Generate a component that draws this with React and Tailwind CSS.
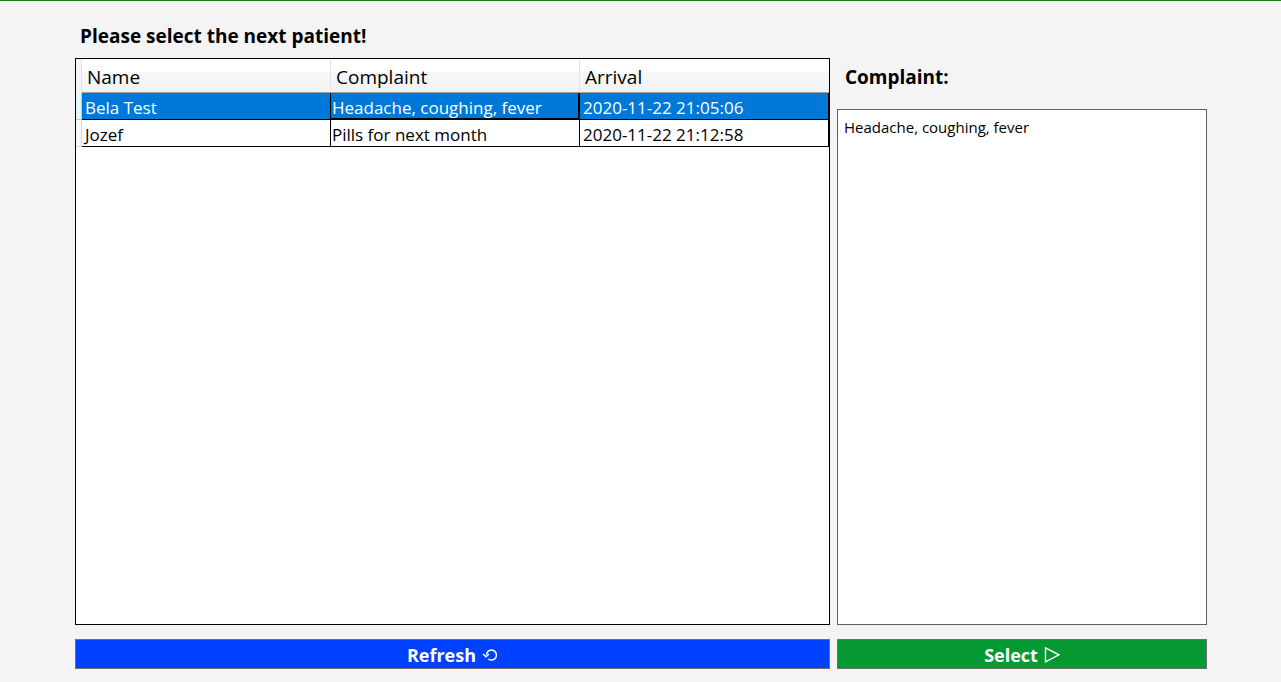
import { useState } from "react";

const patients = [
  { name: "Bela Test", complaint: "Headache, coughing, fever", arrival: "2020-11-22 21:05:06" },
  { name: "Jozef", complaint: "Pills for next month", arrival: "2020-11-22 21:12:58" },
];

function RefreshIcon() {
  return (
    <svg aria-hidden="true" width="16" height="16" viewBox="0 0 16 16" fill="none" stroke="currentColor" strokeWidth="1.5">
      <path d="M4.5 7.6A5 5 0 1 1 6.4 12" />
      <path d="M1 7L4 9.8L7 7" />
    </svg>
  );
}

function PlayIcon() {
  return (
    <svg aria-hidden="true" width="16" height="16" viewBox="0 0 16 16" fill="none" stroke="currentColor" strokeWidth="1.4">
      <path d="M1.5 0.8V14.8L15 7.8Z" />
    </svg>
  );
}

function HeaderCell({ children, last }) {
  return (
    <th
      scope="col"
      className={`h-[34px] border-b border-b-[#a0a0a0] bg-linear-to-b from-white from-40% via-[#f7f8fa] via-40% to-[#f1f2f4] px-[5px] pt-[3px] pb-0 text-left text-[19px] leading-[30px] font-normal ${last ? "" : "border-r border-r-[#e2e3e5]"}`}
    >
      {children}
    </th>
  );
}

export default function App() {
  const [selected, setSelected] = useState(0);
  return (
    <main className="flex min-h-screen flex-col border-t border-[#108010] bg-[#f4f4f4] pr-[74px] pb-[13px] pl-[75px] font-['Open_Sans',sans-serif] text-black">
      <div className="grid flex-1 grid-cols-[755fr_370fr] gap-x-[7px]">
        <section className="flex flex-col">
          <h1 className="px-[5px] pt-[22px] pb-[9px] text-[19px] leading-[26px] font-bold">
            Please select the next patient!
          </h1>
          <div className="flex-1 border border-black bg-white">
            <table className="w-full table-fixed border-separate border-spacing-0">
              <colgroup>
                <col className="w-[6px]" />
                <col />
                <col />
                <col />
              </colgroup>
              <thead>
                <tr>
                  <td className="border-r border-r-[#e2e3e5] bg-[#f4f5f6] p-0" />
                  <HeaderCell>Name</HeaderCell>
                  <HeaderCell>Complaint</HeaderCell>
                  <HeaderCell last>Arrival</HeaderCell>
                </tr>
              </thead>
              <tbody>
                {patients.map((p, i) => {
                  const on = i === selected;
                  const cell = `h-[27px] border-r border-b border-black p-0 text-[17px] leading-[23px] whitespace-nowrap ${on ? "bg-[#0078d7] text-white" : "bg-white"}`;
                  return (
                    <tr key={p.arrival} aria-selected={on} onClick={() => setSelected(i)}>
                      <td
                        className={`border-r border-b p-0 ${on ? "border-[#9bd3ee] bg-[#e4f5fc]" : "border-[#d5d5d5] bg-[#f8f9fa]"}`}
                      />
                      <td className={cell}>
                        <div className="px-[3px] pt-[3px]">{p.name}</div>
                      </td>
                      <td className={cell}>
                        <div className={on ? "h-[26px] border-r border-b border-black px-px pt-[3px]" : "px-px pt-[3px]"}>
                          {p.complaint}
                        </div>
                      </td>
                      <td className={cell}>
                        <div className="px-[3px] pt-[3px]">{p.arrival}</div>
                      </td>
                    </tr>
                  );
                })}
              </tbody>
            </table>
          </div>
        </section>
        <section className="flex flex-col">
          <label htmlFor="complaint" className="px-2 pt-[63px] pb-[19px] text-[19px] leading-[26px] font-bold">
            Complaint:
          </label>
          <textarea
            id="complaint"
            key={selected}
            defaultValue={patients[selected].complaint}
            className="w-full flex-1 resize-none border border-[#606060] bg-white px-[6px] py-[6px] text-[15px] leading-[22px] outline-none"
          />
        </section>
      </div>
      <div className="mt-[14px] grid grid-cols-[755fr_370fr] gap-x-[7px] text-[18px] font-bold text-white">
        <button type="button" className="flex h-[30px] items-center justify-center gap-[6px] border border-[#707070] bg-[#0040ff] pt-[2px]">
          Refresh
          <RefreshIcon />
        </button>
        <button type="button" className="flex h-[30px] items-center justify-center gap-[6px] border border-[#707070] bg-[#059833] pt-[2px]">
          Select
          <PlayIcon />
        </button>
      </div>
    </main>
  );
}
